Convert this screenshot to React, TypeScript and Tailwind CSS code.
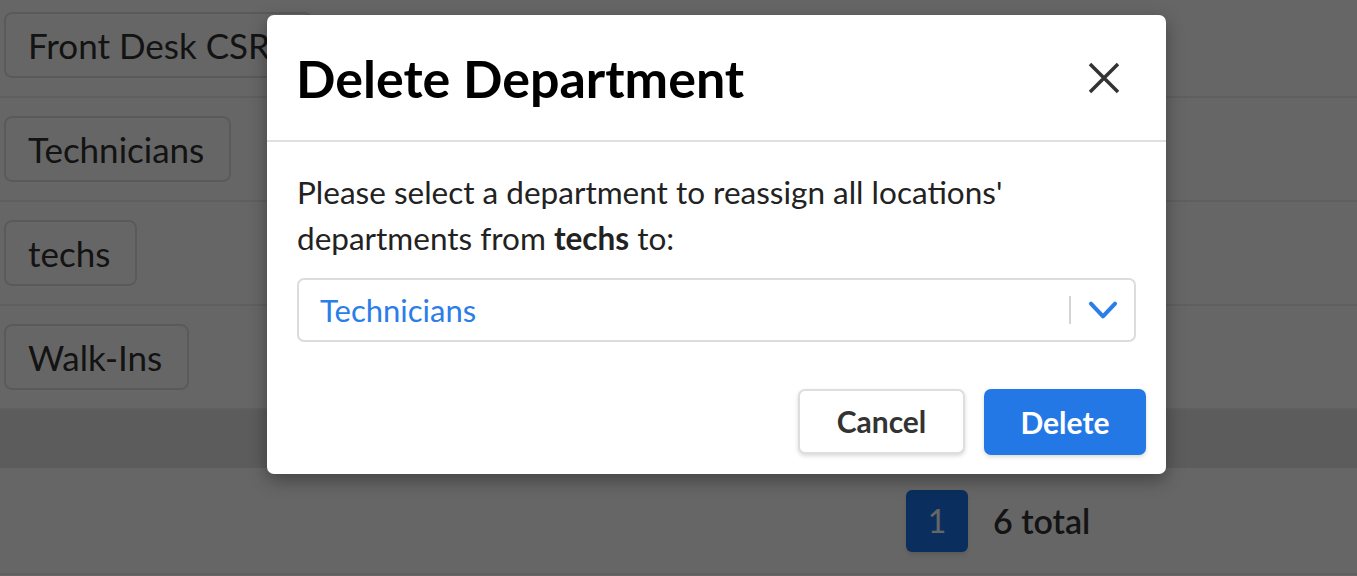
import React from 'react'

const departments = ['Front Desk CSRs', 'Technicians', 'techs', 'Walk-Ins']

export default function App() {
  return (
    <div className="relative w-[1357px] h-[576px] overflow-hidden bg-white font-['Source_Sans_Pro','Lato',sans-serif]">
      {/* Page behind the dialog */}
      <div className="-mt-[6px]">
        {departments.map((name) => (
          <div key={name} className="h-[104px] flex items-center pl-[4px] border-b-2 border-[#ededed]">
            <span className="inline-flex items-center h-[66px] pl-[22px] pr-[25px] border-2 border-[#e2e2e2] rounded-[8px] text-[35px] text-[#303030]">
              {name}
            </span>
          </div>
        ))}
        <div className="h-[58px] bg-[#e6e6e6]" />
        <div className="h-[107px] flex items-center pl-[906px] gap-[25px] border-b-2 border-[#ededed]">
          <span className="w-[62px] h-[62px] rounded-[6px] bg-[#1b75eb] flex items-center justify-center text-[32px] text-white shadow-md">
            1
          </span>
          <span className="text-[34px] font-semibold text-[#333]">6 total</span>
        </div>
      </div>

      {/* Overlay */}
      <div className="absolute inset-0 bg-black/60" />

      {/* Dialog */}
      <div className="absolute left-[267px] top-[15px] w-[899px] h-[459px] bg-white rounded-[7px] shadow-[0_6px_18px_rgba(0,0,0,0.35)] flex flex-col">
        <div className="h-[127px] flex items-center justify-between pl-[29px] pr-[46px] border-b-2 border-[#e0e0e0]">
          <h2 className="text-[52px] font-bold text-black leading-none">Delete Department</h2>
          <button className="w-[32px] h-[32px] flex items-center justify-center text-[#333]">
            <svg viewBox="0 0 24 24" className="w-[32px] h-[32px]" fill="none" stroke="currentColor" strokeWidth={2.6}>
              <path d="M1.5 1.5l21 21M22.5 1.5l-21 21" />
            </svg>
          </button>
        </div>

        <div className="px-[30px] pt-[27px]">
          <p className="text-[31.5px] leading-[46px] text-[#222]">
            Please select a department to reassign all locations'
            <br />
            departments from <b className="font-bold">techs</b> to:
          </p>
          <div className="mt-[17px] h-[64px] flex items-center border-2 border-[#dcdcdc] rounded-[7px]">
            <span className="flex-1 pl-[21px] text-[31px] text-[#2b7de9]">Technicians</span>
            <span className="w-[2px] h-[28px] bg-[#d4d4d4]" />
            <span className="w-[63px] flex items-center justify-center text-[#2b7de9]">
              <svg viewBox="0 0 24 24" className="w-[34px] h-[34px]" fill="none" stroke="currentColor" strokeWidth={2.9} strokeLinecap="round" strokeLinejoin="round">
                <path d="M3.5 7.5l8.5 9 8.5-9" />
              </svg>
            </span>
          </div>
        </div>

        <div className="mt-auto flex justify-end gap-[19px] pr-[20px] pb-[19px]">
          <button className="w-[167px] h-[65px] rounded-[7px] border-2 border-[#dedede] bg-white shadow-[0_2px_4px_rgba(0,0,0,0.15)] text-[30px] font-bold text-[#333]">
            Cancel
          </button>
          <button className="w-[162px] h-[66px] rounded-[7px] bg-[#2378e6] shadow-[0_2px_4px_rgba(0,0,0,0.15)] text-[30px] font-bold text-white">
            Delete
          </button>
        </div>
      </div>
    </div>
  )
}
